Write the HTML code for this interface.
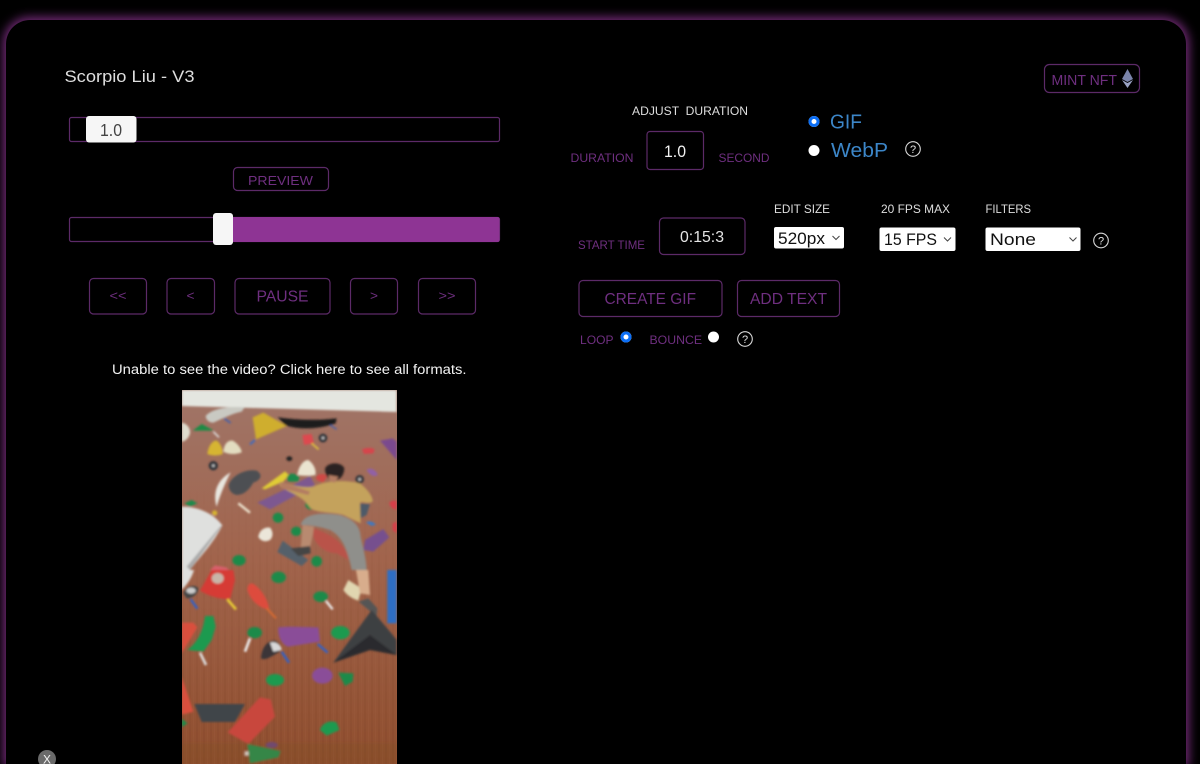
<!DOCTYPE html>
<html><head><meta charset="utf-8"><title>Edit</title>
<style>
html,body{margin:0;padding:0;background:#000;width:1200px;height:764px;overflow:hidden}
#r{position:relative;width:1200px;height:764px;overflow:hidden;background:#000}
#p{position:absolute;left:6px;top:20px;width:1180px;height:744px;border-radius:24px 24px 0 0;background:#000;box-shadow:0 0 10px 3px rgba(142,52,148,.8)}
svg{position:absolute;left:0;top:0;display:block}
text{font-family:"Liberation Sans",sans-serif}
.b{fill:none;stroke:#5c2a68;stroke-width:1.2}
.t{fill:#6f2f80}
.w{fill:#dedede}
</style></head><body>
<div id="r">
<div id="p"></div>
<svg width="1200" height="764" viewBox="0 0 1200 764">
<defs>
<clipPath id="c"><rect x="182" y="390" width="215" height="374"/></clipPath>
<filter id="bl" x="-5%" y="-5%" width="110%" height="110%"><feGaussianBlur stdDeviation="1"/></filter>
<linearGradient id="wall" x1="0" y1="0" x2="0" y2="1"><stop offset="0" stop-color="#a07568"/><stop offset=".45" stop-color="#a1644c"/><stop offset="1" stop-color="#8f4e2e"/></linearGradient>
<linearGradient id="fade" x1="0" y1="0" x2="0" y2="1"><stop offset="0" stop-color="#000"/><stop offset="1" stop-color="#fff"/></linearGradient>
<mask id="m" maskUnits="userSpaceOnUse" x="182" y="480" width="215" height="284"><rect x="182" y="480" width="215" height="284" fill="url(#fade)"/></mask>
<pattern id="st" width="7" height="40" patternUnits="userSpaceOnUse"><rect x="0" width="2" height="40" fill="#5a2c14" opacity=".14"/><rect x="4" width="1" height="40" fill="#d09a78" opacity=".1"/></pattern>
</defs>
<text x="64.5" y="82" font-size="17" textLength="130" lengthAdjust="spacingAndGlyphs" class="w">Scorpio Liu - V3</text>

<rect x="69.5" y="117.5" width="430" height="24" rx="2" class="b"/>
<rect x="86" y="116" width="50.5" height="26.5" rx="3" fill="#f6f6f6"/>
<text x="100" y="136" font-size="17.5" textLength="22" lengthAdjust="spacingAndGlyphs" fill="#444">1.0</text>

<rect x="233.5" y="167.5" width="95" height="23" rx="4" class="b"/>
<text x="248" y="185" font-size="13" textLength="65" lengthAdjust="spacingAndGlyphs" class="t">PREVIEW</text>

<rect x="69.5" y="217.5" width="430" height="24" rx="2" class="b"/>
<rect x="232" y="217" width="267.5" height="25" rx="2" fill="#8e3494"/>
<rect x="213" y="213" width="20" height="32" rx="3" fill="#f6f6f6"/>

<rect x="89.5" y="278.5" width="57" height="35.5" rx="4" class="b"/>
<text x="109.5" y="300" font-size="13" textLength="17" lengthAdjust="spacingAndGlyphs" class="t">&lt;&lt;</text>
<rect x="167" y="278.5" width="47.5" height="35.5" rx="4" class="b"/>
<text x="186.5" y="300" font-size="13" textLength="8" lengthAdjust="spacingAndGlyphs" class="t">&lt;</text>
<rect x="235" y="278.5" width="95" height="35.5" rx="4" class="b"/>
<text x="256.5" y="301.5" font-size="15.5" textLength="52" lengthAdjust="spacingAndGlyphs" class="t">PAUSE</text>
<rect x="350.5" y="278.5" width="47" height="35.5" rx="4" class="b"/>
<text x="370" y="300" font-size="13" textLength="8" lengthAdjust="spacingAndGlyphs" class="t">&gt;</text>
<rect x="418.5" y="278.5" width="57" height="35.5" rx="4" class="b"/>
<text x="438.5" y="300" font-size="13" textLength="17" lengthAdjust="spacingAndGlyphs" class="t">&gt;&gt;</text>

<text x="112" y="374" font-size="13.5" textLength="354.5" lengthAdjust="spacingAndGlyphs" fill="#f2f2f2">Unable to see the video? Click here to see all formats.</text>

<g clip-path="url(#c)">
<rect x="182" y="390" width="215" height="374" fill="url(#wall)"/>
<rect x="182" y="480" width="215" height="284" fill="url(#st)" mask="url(#m)" opacity=".6"/>
<g filter="url(#bl)">
<g transform="translate(170,380) scale(.33333)">
<polygon points="35,30 680,30 680,96 35,78" fill="#e4e6e0"/>
<path d="M107,108C125,85 180,78 224,82L215,95C190,100 165,112 130,128C115,128 108,118 107,108Z" fill="#c9c9c2"/>
<path d="M162,115L182,129" stroke="#3d5fb0" stroke-width="5"/>
<path d="M35,128C50,130 62,145 60,160C55,178 42,185 35,185Z" fill="#dedccd"/>
<path d="M68,152L95,132L132,152Z" fill="#1d8a45"/>
<path d="M130,155L147,172" stroke="#ddd" stroke-width="5"/>
<path d="M248,112L280,98L350,138L258,178Z" fill="#cfae2e"/>
<path d="M255,180L240,193" stroke="#3d6ac0" stroke-width="6"/>
<path d="M323,112C380,120 440,122 500,115L497,130C450,148 380,150 345,135Z" fill="#1b1a1c"/>
<path d="M480,135L500,148" stroke="#3d5fb0" stroke-width="4"/>
<path d="M397,165L425,162L432,190L402,195Z" fill="#dd4a4f"/>
<path d="M425,190L446,208" stroke="#e3c53a" stroke-width="5"/>
<circle cx="459" cy="174" r="13" fill="#33343a"/><circle cx="459" cy="174" r="4" fill="#ccc"/>
<path d="M112,222C115,195 130,180 140,182C152,190 160,210 158,222C145,228 125,228 112,222Z" fill="#d6b431"/>
<path d="M160,215C162,190 175,180 188,182C200,188 215,205 215,217C195,224 175,224 160,215Z" fill="#e2dcc0"/>
<path d="M630,182L668,175L680,185L680,240Z" fill="#7a4a8e"/>
<path d="M576,208C590,202 605,202 614,208L610,220L582,222Z" fill="#d6454c"/>
<circle cx="130" cy="257" r="14" fill="#33343a"/><circle cx="130" cy="257" r="4" fill="#ccc"/>
<ellipse cx="358" cy="236" rx="9" ry="7" fill="#222"/>
<path d="M382,285C385,260 400,240 415,240C430,250 440,270 436,285C420,288 400,288 382,285Z" fill="#eae4d0"/>
<path d="M140,380C128,340 140,300 182,277C165,310 150,345 140,380Z" fill="#e8e6df"/>
<path d="M176,315C185,285 230,265 260,272C280,285 272,300 250,308C240,325 225,345 200,345C185,342 176,330 176,315Z" fill="#4d5052"/>
<path d="M275,325L345,274L357,285L340,305L285,328Z" fill="#e0cc35"/>
<path d="M350,295C352,280 370,275 388,290L385,305H355Z" fill="#1f8a4b"/>
<path d="M262,368L345,328L420,288L435,315L300,388Z" fill="#7d5890"/>
<path d="M438,290C450,278 470,280 470,292L460,308L440,300Z" fill="#cf4a44"/>
<path d="M590,270C600,260 620,270 623,285C615,292 600,288 590,270Z" fill="#9160a5"/>
<circle cx="569" cy="298" r="13" fill="#33343a"/><circle cx="569" cy="298" r="4" fill="#ccc"/>
<path d="M43,370L65,360L82,370L60,380Z" fill="#1f8a4b"/>
<path d="M205,370L240,398" stroke="#eee5d0" stroke-width="7"/>
<circle cx="134" cy="399" r="8" fill="#d6b431"/>
<path d="M658,368C668,358 680,362 680,365L680,388C668,390 660,380 658,368Z" fill="#d83d48"/>
<path d="M668,430L680,425L680,460L668,450Z" fill="#d83d48"/>
<path d="M35,380C85,380 130,400 157,436C130,490 90,530 60,570L35,570Z" fill="#dfe0de"/>
<path d="M60,570L157,436L150,440L50,560Z" fill="#aaa"/>
<ellipse cx="324" cy="413" rx="16" ry="15" fill="#1d8a4a"/>
<ellipse cx="425" cy="374" rx="19" ry="15" fill="#1d8a4a"/>
<ellipse cx="379" cy="454" rx="16" ry="14" fill="#1d8a4a"/>
<path d="M265,470C268,450 285,440 300,443C310,455 310,470 300,480C285,488 270,482 265,470Z" fill="#ebe6d9"/>
<ellipse cx="207" cy="541" rx="20" ry="16" fill="#1d8a4a"/>
<ellipse cx="440" cy="544" rx="16" ry="16" fill="#1d8a4a"/>
<path d="M120,570L135,556L170,562L180,575Z" fill="#d6606a"/>
<path d="M322,516L338,482L415,540L395,558Z" fill="#54606a"/>
<path d="M580,510L585,480L640,447L658,472L610,515Z" fill="#76508e"/>
<path d="M430,445C480,460 530,490 535,540L500,520C470,520 440,500 430,470Z" fill="#b9534a"/>
<path d="M588,428C595,420 610,425 618,434L605,438Z" fill="#4078c0"/>
<path d="M562,370L600,372L590,405L565,418Z" fill="#4d5a68"/>
<path d="M330,305C360,315 400,325 430,320C470,300 530,300 570,310C590,325 610,350 608,365C590,375 575,360 570,370L572,430L520,405C480,395 430,400 418,380C395,345 350,335 330,318Z" fill="#c4a25c"/>
<path d="M330,305L420,335L415,345L335,325Z" fill="#b37c62"/>
<path d="M465,265C475,245 515,245 523,265C522,290 505,305 485,300C470,295 465,280 465,265Z" fill="#2a2320"/>
<path d="M475,285L505,290L495,308L480,305Z" fill="#b37c62"/>
<path d="M392,435C400,405 440,395 510,405C540,415 570,430 572,470C578,500 590,540 590,570L545,570C535,520 520,470 480,450C450,440 420,435 392,435Z" fill="#8f8f8b"/>
<path d="M398,435C395,450 395,480 392,500L420,505C425,480 430,460 432,440Z" fill="#b88a70"/>
<path d="M362,505L420,498L422,520L385,528Z" fill="#444"/>
</g>
<g transform="translate(170,570) scale(.33333)">
<path d="M35,0H72C65,25 50,45 35,60Z" fill="#dfe0de"/>
<path d="M90,62L125,0H190L195,30L180,88C150,88 115,78 90,62Z" fill="#d63a34"/>
<ellipse cx="143" cy="25" rx="18" ry="16" fill="#c8b5a8"/>
<path d="M172,88L198,118" stroke="#e8cc35" stroke-width="8"/>
<path d="M40,70C45,50 75,40 85,55C85,70 70,85 50,85Z" fill="#444"/>
<ellipse cx="63" cy="62" rx="14" ry="9" fill="#ccc"/>
<path d="M62,88L82,116" stroke="#3060c8" stroke-width="7"/>
<ellipse cx="326" cy="22" rx="22" ry="17" fill="#1d8a4a"/>
<path d="M232,60C232,40 245,35 255,45C275,60 295,90 298,120C275,115 245,100 232,60Z" fill="#dd4c3c"/>
<path d="M290,115L318,145" stroke="#d86a30" stroke-width="6"/>
<ellipse cx="452" cy="80" rx="22" ry="16" fill="#1d8a4a"/>
<path d="M468,93L488,118" stroke="#eee" stroke-width="7"/>
<path d="M520,60L535,30L575,55L565,92C545,85 530,75 520,60Z" fill="#e0d6b0"/>
<path d="M558,0H595L600,75L570,70Z" fill="#d8ad8c"/>
<path d="M566,95L595,85L622,115L620,140L590,115Z" fill="#555"/>
<rect x="652" y="0" width="28" height="160" fill="#2f6ec4"/>
<path d="M490,278L605,120L660,185L680,210V255L600,240Z" fill="#3d3f42"/>
<path d="M490,278L600,195L680,255L600,240Z" fill="#2a2b2d"/>
<ellipse cx="511" cy="188" rx="28" ry="20" fill="#1d9a50"/>
<path d="M35,158H70L82,172L50,225L35,250Z" fill="#d9503e"/>
<path d="M52,240C85,215 100,180 105,138H130L137,170L125,210L100,245Z" fill="#1d9a50"/>
<path d="M90,248L108,285" stroke="#ddd" stroke-width="8"/>
<ellipse cx="254" cy="188" rx="22" ry="17" fill="#1d8a4a"/>
<path d="M240,205L225,245" stroke="#eee" stroke-width="8"/>
<path d="M325,172C365,168 410,172 445,172L450,215L355,230C335,225 322,195 325,172Z" fill="#8a4e98"/>
<path d="M443,222L473,248" stroke="#3060c8" stroke-width="7"/>
<path d="M273,265C275,230 295,210 315,212C335,222 340,245 320,250C300,262 285,272 273,265Z" fill="#3a3638"/>
<path d="M300,218C315,212 335,225 335,240L310,245Z" fill="#d8d8d8"/>
<path d="M335,245L357,278" stroke="#3060c8" stroke-width="7"/>
<ellipse cx="315" cy="330" rx="27" ry="18" fill="#1d9a50"/>
<ellipse cx="457" cy="317" rx="31" ry="24" fill="#8a4e98"/>
<path d="M505,308L550,310L548,335L525,348Z" fill="#1d8a4a"/>
<path d="M35,320L70,425L40,433L35,432Z" fill="#d9503e"/>
<path d="M73,402H225L195,456H95Z" fill="#3f4449"/>
<path d="M173,487L270,382L302,388L315,440L235,522Z" fill="#c8473c"/>
<path d="M35,445L52,460L35,472Z" fill="#1d8a4a"/>
<path d="M450,480C455,460 480,448 500,458L508,480L470,497Z" fill="#1d9a50"/>
<path d="M232,522L332,543L325,562L240,580Z" fill="#1d9a50"/>
<rect x="224" y="544" width="12" height="13" fill="#eee"/>
<ellipse cx="305" cy="525" rx="18" ry="9" fill="#6e4a86"/>
<rect x="35" y="518" width="645" height="64" fill="#7c4a28" opacity=".25"/>
</g>
</g>
</g>

<circle cx="47" cy="759" r="9" fill="#6a6a6a"/>
<text x="47" y="763.5" font-size="12" text-anchor="middle" fill="#f2f2f2">X</text>

<rect x="1044.5" y="64.5" width="95" height="28" rx="5" class="b"/>
<text x="1051.5" y="85" font-size="14.5" textLength="65.5" lengthAdjust="spacingAndGlyphs" class="t">MINT NFT</text>
<polygon points="1127.5,69 1133,79 1127.5,82 1122,79" fill="#7a84aa"/>
<polygon points="1127.5,83 1133,80 1127.5,88 1122,80" fill="#9aa3c4"/>

<text x="632" y="115" font-size="11.5" textLength="116" lengthAdjust="spacingAndGlyphs" class="w" xml:space="preserve">ADJUST  DURATION</text>
<text x="570.5" y="162" font-size="11.5" textLength="63" lengthAdjust="spacingAndGlyphs" class="t">DURATION</text>
<rect x="647" y="131.5" width="56.5" height="38" rx="3" class="b"/>
<text x="664" y="157" font-size="17" textLength="22" lengthAdjust="spacingAndGlyphs" fill="#f2f2f2">1.0</text>
<text x="718.5" y="162" font-size="11.5" textLength="51" lengthAdjust="spacingAndGlyphs" class="t">SECOND</text>

<circle cx="814" cy="121.5" r="5.5" fill="#fff"/><circle cx="814" cy="121.5" r="4" fill="none" stroke="#0b6ef5" stroke-width="3"/>
<text x="830" y="128.5" font-size="20" textLength="32" lengthAdjust="spacingAndGlyphs" fill="#3c86c8">GIF</text>
<circle cx="814" cy="150.5" r="5.5" fill="#fff"/>
<text x="831" y="157" font-size="20" textLength="57" lengthAdjust="spacingAndGlyphs" fill="#3c86c8">WebP</text>
<circle cx="913" cy="149" r="7.3" fill="none" stroke="#d8d8d8" stroke-width="1.1"/>
<text x="913" y="153" font-size="11" text-anchor="middle" fill="#e0e0e0">?</text>

<text x="578" y="249" font-size="11.5" textLength="67" lengthAdjust="spacingAndGlyphs" class="t">START TIME</text>
<rect x="659.5" y="218" width="85.5" height="36.5" rx="4" class="b"/>
<text x="680" y="242" font-size="16" textLength="44" lengthAdjust="spacingAndGlyphs" fill="#e4e4e4">0:15:3</text>

<text x="774" y="213" font-size="11.5" textLength="56" lengthAdjust="spacingAndGlyphs" class="w">EDIT SIZE</text>
<text x="881" y="213" font-size="11.5" textLength="69" lengthAdjust="spacingAndGlyphs" class="w">20 FPS MAX</text>
<text x="985.5" y="213" font-size="11.5" textLength="45.5" lengthAdjust="spacingAndGlyphs" class="w">FILTERS</text>

<rect x="774" y="227" width="70" height="21.5" rx="2" fill="#fff"/>
<text x="778" y="244" font-size="16.5" textLength="47" lengthAdjust="spacingAndGlyphs" fill="#111">520px</text>
<path d="M832.5,236l3.5,3.5 3.5,-3.5" fill="none" stroke="#444" stroke-width="1"/>
<rect x="879.5" y="227.5" width="76" height="23.5" rx="2" fill="#fff"/>
<text x="884" y="245" font-size="17" textLength="53" lengthAdjust="spacingAndGlyphs" fill="#111">15 FPS</text>
<path d="M944,237.5l3.5,3.5 3.5,-3.5" fill="none" stroke="#444" stroke-width="1"/>
<rect x="985.5" y="227.5" width="95" height="23.5" rx="2" fill="#fff"/>
<text x="990" y="245" font-size="17" textLength="46" lengthAdjust="spacingAndGlyphs" fill="#111">None</text>
<path d="M1069.5,237.5l3.5,3.5 3.5,-3.5" fill="none" stroke="#444" stroke-width="1"/>
<circle cx="1101" cy="240.5" r="7.3" fill="none" stroke="#d8d8d8" stroke-width="1.1"/>
<text x="1101" y="244.5" font-size="11" text-anchor="middle" fill="#e0e0e0">?</text>

<rect x="579" y="280.5" width="143" height="36" rx="4" class="b"/>
<text x="604.5" y="304" font-size="15.5" textLength="91.5" lengthAdjust="spacingAndGlyphs" class="t">CREATE GIF</text>
<rect x="737.5" y="280.5" width="102" height="36" rx="4" class="b"/>
<text x="750" y="304" font-size="15.5" textLength="77" lengthAdjust="spacingAndGlyphs" class="t">ADD TEXT</text>

<text x="580" y="344" font-size="11.5" textLength="33.5" lengthAdjust="spacingAndGlyphs" class="t">LOOP</text>
<circle cx="626" cy="337" r="5.5" fill="#fff"/><circle cx="626" cy="337" r="4" fill="none" stroke="#0b6ef5" stroke-width="3"/>
<text x="649.5" y="344" font-size="11.5" textLength="52.5" lengthAdjust="spacingAndGlyphs" class="t">BOUNCE</text>
<circle cx="713.5" cy="337" r="5.5" fill="#fff"/>
<circle cx="745" cy="339" r="7.3" fill="none" stroke="#d8d8d8" stroke-width="1.1"/>
<text x="745" y="343" font-size="11" text-anchor="middle" fill="#e0e0e0">?</text>
</svg>
</div>
</body></html>
